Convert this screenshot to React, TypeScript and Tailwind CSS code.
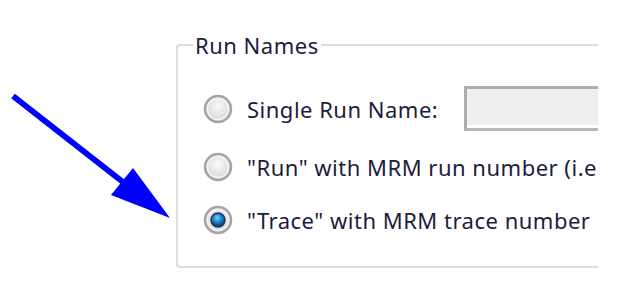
import React from 'react';

const Radio = ({ checked }: { checked?: boolean }) => (
  <svg width="30" height="30" viewBox="0 0 30 30" className="shrink-0">
    <defs>
      <radialGradient id={checked ? 'rgc' : 'rgu'} cx="0.5" cy="0.4" r="0.6">
        <stop offset="0" stopColor="#fbfbfb" />
        <stop offset="1" stopColor="#d2d2d2" />
      </radialGradient>
      <radialGradient id="dot" cx="0.45" cy="0.35" r="0.6">
        <stop offset="0" stopColor="#7fd0ff" />
        <stop offset="0.5" stopColor="#1b84cf" />
        <stop offset="1" stopColor="#0b3f73" />
      </radialGradient>
    </defs>
    <circle cx="15" cy="15" r="13" fill={`url(#${checked ? 'rgc' : 'rgu'})`} stroke="#a4a4a4" strokeWidth="2.5" />
    <circle cx="15" cy="15" r="10.5" fill="none" stroke="#f4f4f4" strokeWidth="1.5" />
    {checked && <circle cx="15" cy="15" r="7" fill="url(#dot)" stroke="#1d3557" strokeWidth="1.5" />}
  </svg>
);

export default function App() {
  const text = "text-[22px] leading-[24px] tracking-[0.5px] text-[#1c1c3c] whitespace-nowrap";
  return (
    <div className="relative w-[621px] h-[285px] bg-white overflow-hidden" style={{ fontFamily: '"Noto Sans", "Open Sans", sans-serif' }}>
      <div className="w-[598px] overflow-hidden pt-[33px] pl-[176px]">
        <fieldset className="w-[460px] h-[235px] border-2 border-[#d5dee4] rounded-[4px] pl-[25px] pt-[29px] m-0">
          <legend className={`${text} ml-[-10px] px-[2px]`}>Run Names</legend>
          <div className="flex flex-col gap-[19px]">
            <div className="flex items-center h-[45px]">
              <Radio />
              <span className={`${text} ml-[14px]`}>Single Run Name:</span>
              <div className="ml-[26px] w-[200px] h-[45px] border-[3px] border-[#adadad] bg-[#efefef] border-b-[#b8b8b8] shadow-[inset_0_-3px_0_#ffffff] shrink-0" />
            </div>
            <div className="flex items-center h-[34px]">
              <Radio />
              <span className={`${text} ml-[14px]`}>"Run" with MRM run number (i.e. Run1)</span>
            </div>
            <div className="flex items-center h-[34px]">
              <Radio checked />
              <span className={`${text} ml-[14px]`}>"Trace" with MRM trace number</span>
            </div>
          </div>
        </fieldset>
      </div>
      <svg className="absolute left-0 top-0" width="200" height="240" viewBox="0 0 200 240">
        <line x1="13" y1="96" x2="128" y2="186" stroke="#0000ff" strokeWidth="6" />
        <polygon points="170,218 133,168 111,195" fill="#0000ff" />
      </svg>
    </div>
  );
}
